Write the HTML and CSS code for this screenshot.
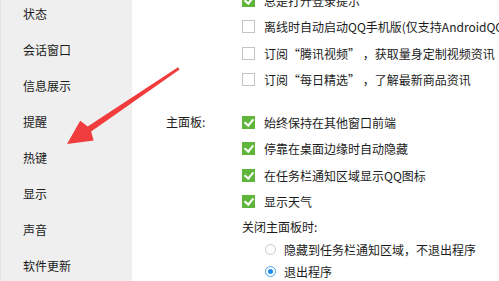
FILE: index.html
```html
<!DOCTYPE html>
<html lang="zh-CN">
<head>
<meta charset="utf-8">
<link rel="stylesheet" href="styles.css">
</head>
<body>
<div class="window">
  <nav class="sidebar">
    <ul class="menu">
      <li>状态</li>
      <li>会话窗口</li>
      <li>信息展示</li>
      <li>提醒</li>
      <li>热键</li>
      <li>显示</li>
      <li>声音</li>
      <li>软件更新</li>
    </ul>
  </nav>
  <main class="content">
    <section class="group">
      <div class="label"></div>
      <div class="options">
        <div class="row"><span class="cb on"></span>总是打开登录提示</div>
        <div class="row"><span class="cb"></span>离线时自动启动QQ手机版(仅支持AndroidQQ)</div>
        <div class="row"><span class="cb"></span>订阅“腾讯视频” ，获取量身定制视频资讯</div>
        <div class="row"><span class="cb"></span>订阅“每日精选” ，了解最新商品资讯</div>
      </div>
    </section>
    <section class="group second">
      <div class="label">主面板:</div>
      <div class="options">
        <div class="row"><span class="cb on"></span>始终保持在其他窗口前端</div>
        <div class="row"><span class="cb on"></span>停靠在桌面边缘时自动隐藏</div>
        <div class="row"><span class="cb on"></span>在任务栏通知区域显示QQ图标</div>
        <div class="row"><span class="cb on"></span>显示天气</div>
        <div class="sub">关闭主面板时:</div>
        <div class="row radio-row"><span class="rb"></span>隐藏到任务栏通知区域，不退出程序</div>
        <div class="row radio-row"><span class="rb on"></span>退出程序</div>
      </div>
    </section>
  </main>
  <svg class="arrow" width="499" height="281" viewBox="0 0 499 281">
    <polygon fill="#f03c3c" points="178,67.2 179.6,69.6 91.1,131.4 93.6,140.5 67,144 80.2,120.7 87.7,126.4"/>
  </svg>
</div>
</body>
</html>
```
FILE: styles.css
```css
* { box-sizing: border-box; }
html, body { margin: 0; padding: 0; }
body {
  width: 499px;
  height: 281px;
  overflow: hidden;
  background: #fff;
  font-family: "Noto Sans CJK SC", "Noto Sans", sans-serif;
  font-size: 12px;
  color: #1b1b1b;
}
.window {
  position: relative;
  display: flex;
  width: 499px;
  height: 281px;
}
.sidebar {
  width: 132px;
  flex: none;
  background: #efefef;
  border-left: 1px solid #e2e2e2;
}
.menu {
  list-style: none;
  margin: -4px 0 0 0;
  padding: 0 0 0 22px;
}
.menu li {
  height: 36px;
  line-height: 36px;
}
.content {
  flex: 1;
  padding-left: 34px;
  margin-top: -13px;
}
.group {
  display: grid;
  grid-template-columns: 76px 1fr;
}
.group.second { margin-top: 16px; }
.label {
  line-height: 26px;
}
.options { min-width: 0; }
.row {
  height: 26.5px;
  display: flex;
  align-items: center;
  white-space: nowrap;
}
.cb {
  width: 13px;
  height: 13px;
  border: 1px solid #c4c4c4;
  background: #fff;
  margin-right: 9px;
  flex: none;
  position: relative;
}
.cb.on {
  background: #5fb63a;
  border-color: #5fb63a;
}
.cb.on::after {
  content: "";
  position: absolute;
  left: 3px;
  top: 0px;
  width: 4px;
  height: 7px;
  border: solid #fff;
  border-width: 0 2px 2px 0;
  transform: rotate(40deg);
}
.sub {
  height: 23px;
  line-height: 23px;
}
.radio-row {
  padding-left: 23px;
  height: 22.5px;
}
.rb {
  width: 11px;
  height: 11px;
  border-radius: 50%;
  border: 1px solid #c9c9c9;
  background: #fff;
  margin-right: 8px;
  flex: none;
  position: relative;
}
.rb.on {
  border-color: #4aa3ee;
}
.rb.on::after {
  content: "";
  position: absolute;
  left: 2px;
  top: 2px;
  width: 5px;
  height: 5px;
  border-radius: 50%;
  background: #1c8cf0;
}
.arrow {
  position: absolute;
  left: 0;
  top: 0;
  pointer-events: none;
}
```
